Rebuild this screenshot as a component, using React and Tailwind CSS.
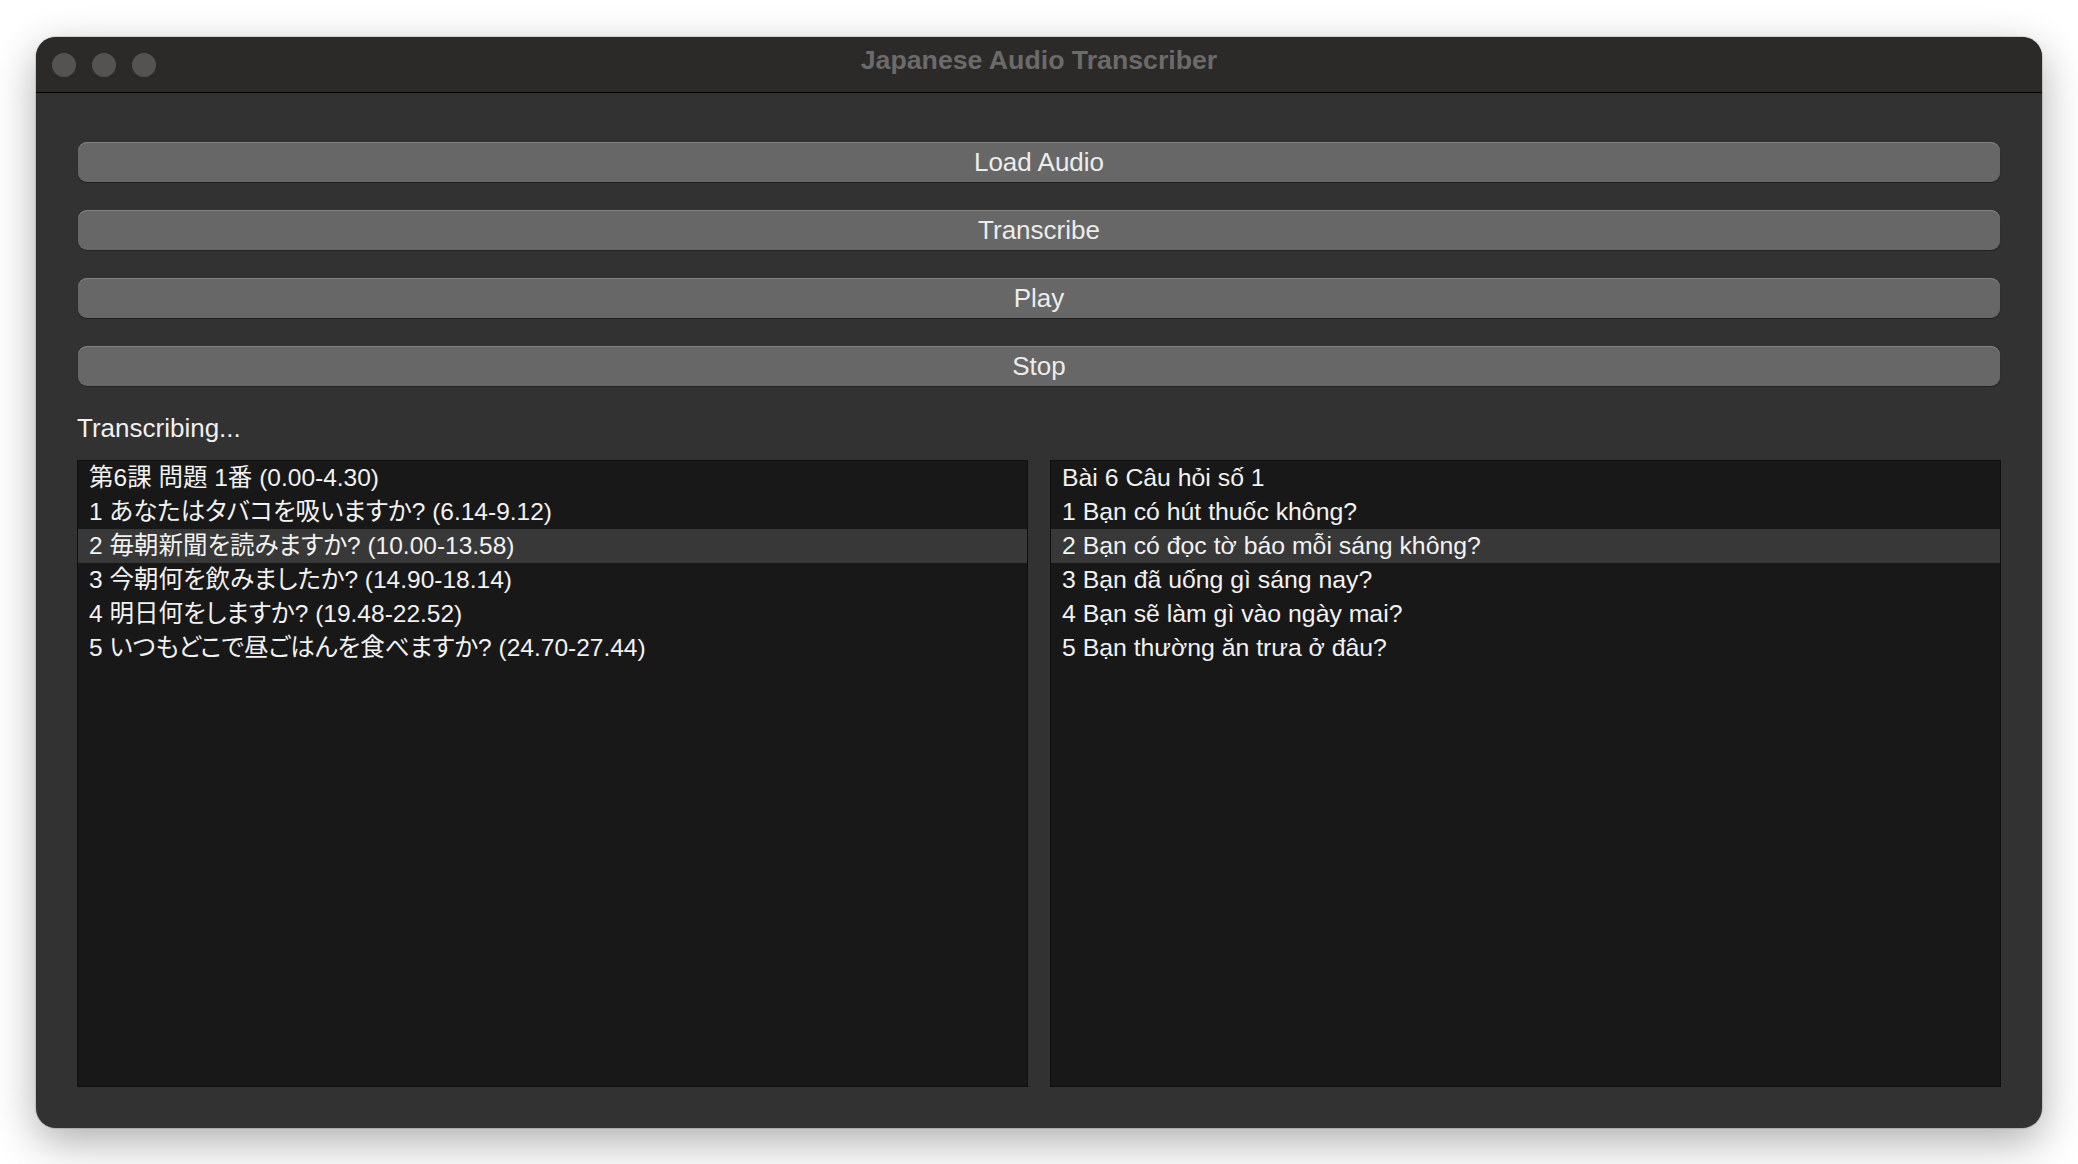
const JA = [
  '第6課 問題 1番 (0.00-4.30)',
  '1 あなたはタバコを吸いますか? (6.14-9.12)',
  '2 毎朝新聞を読みますか? (10.00-13.58)',
  '3 今朝何を飲みましたか? (14.90-18.14)',
  '4 明日何をしますか? (19.48-22.52)',
  '5 いつもどこで昼ごはんを食べますか? (24.70-27.44)',
];

const VI = [
  'Bài 6 Câu hỏi số 1',
  '1 Bạn có hút thuốc không?',
  '2 Bạn có đọc tờ báo mỗi sáng không?',
  '3 Bạn đã uống gì sáng nay?',
  '4 Bạn sẽ làm gì vào ngày mai?',
  '5 Bạn thường ăn trưa ở đâu?',
];

const SELECTED = 2;

function TrafficLights() {
  return (
    <div className="flex items-center gap-[16px] pl-[16px]">
      <span className="w-[24px] h-[24px] rounded-full bg-[#545352]" />
      <span className="w-[24px] h-[24px] rounded-full bg-[#545352]" />
      <span className="w-[24px] h-[24px] rounded-full bg-[#545352]" />
    </div>
  );
}

function ActionButton({label}) {
  return (
    <button className="mx-px h-[40px] rounded-[9px] bg-[#676767] text-[#ececec] text-[26px] leading-[40px] pb-[4px] shadow-[inset_0_1px_0_#828282,0_1px_1px_rgba(0,0,0,0.35)]">
      {label}
    </button>
  );
}

function ListBox({items, className = ''}) {
  return (
    <div className={`border border-[#0f0f0f] bg-[#181818] overflow-hidden ${className}`}>
      {items.map((text, i) => (
        <div
          key={i}
          className={`h-[34px] leading-[34px] pl-[11px] text-[#f2f2f2] whitespace-nowrap ${
            i === SELECTED ? 'bg-[#383838]' : ''
          }`}
        >
          {text}
        </div>
      ))}
    </div>
  );
}

export default function App() {
  return (
    <div
      className="w-[2078px] h-[1164px] bg-white pt-[37px] px-[36px] pb-[36px]"
      style={{fontFamily: '"Liberation Sans", "Noto Sans CJK JP", sans-serif'}}
    >
      <div className="w-[2006px] h-[1091px] rounded-[20px] bg-[#323232] overflow-hidden flex flex-col shadow-[0_14px_44px_rgba(0,0,0,0.32),0_0_0_1px_rgba(0,0,0,0.12)]">
        {/* Title bar */}
        <div className="h-[56px] shrink-0 border-b border-black bg-[#2b2a28] grid grid-cols-[1fr_auto_1fr] items-center">
          <TrafficLights />
          <div className="text-[26.7px] font-bold text-[#6b6b6b] pb-[8px]">
            Japanese Audio Transcriber
          </div>
          <div />
        </div>

        {/* Content */}
        <div className="flex-1 flex flex-col px-[41px] pt-[49px] pb-[41px] min-h-0">
          <div className="flex flex-col gap-[28px]">
            <ActionButton label="Load Audio" />
            <ActionButton label="Transcribe" />
            <ActionButton label="Play" />
            <ActionButton label="Stop" />
          </div>

          <div className="mt-[25px] h-[34px] leading-[34px] text-[26px] text-[#f0f0f0]">
            Transcribing...
          </div>

          <div className="mt-[15px] flex-1 min-h-0 grid grid-cols-2 gap-[22px]">
            <ListBox items={JA} className="text-[24.5px] [font-feature-settings:'palt']" />
            <ListBox items={VI} className="text-[24.8px]" />
          </div>
        </div>
      </div>
    </div>
  );
}
